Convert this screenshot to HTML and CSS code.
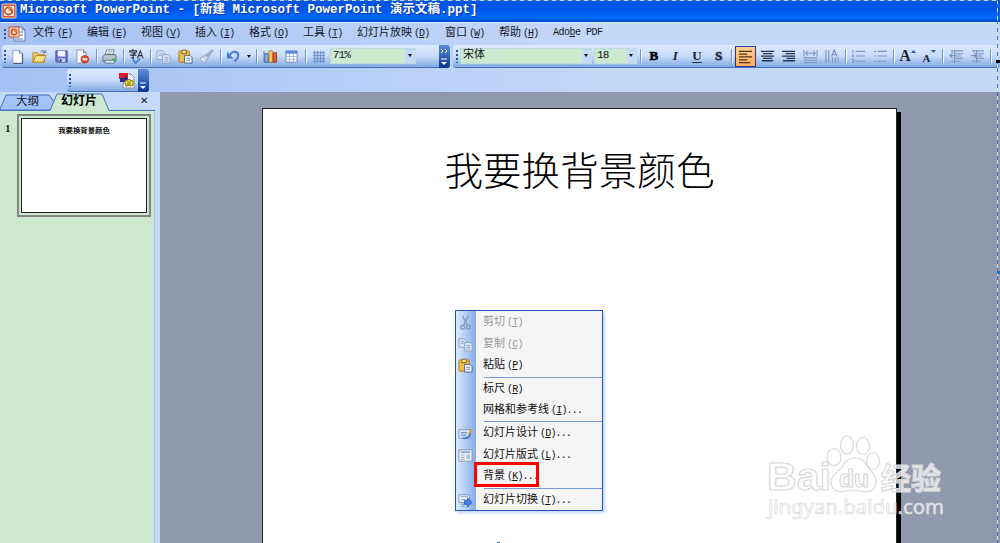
FILE: index.html
```html
<!DOCTYPE html>
<html lang="zh-CN">
<head>
<meta charset="utf-8">
<title>Microsoft PowerPoint</title>
<link rel="stylesheet" href="styles.css">
</head>
<body>
<div class="window">
<header class="titlebar">
<svg class="appicon" width="16" height="16" viewBox="0 0 16 16"><rect x="1" y="1" width="14" height="14" rx="1" fill="#d9623a" stroke="#f6c9ae"/><rect x="3" y="3" width="10" height="10" fill="#fff1e4"/><circle cx="7.5" cy="8" r="3.6" fill="none" stroke="#c84820" stroke-width="1.6"/><path d="M7.5 8V4h3.5v4z" fill="#e08040"/><path d="M11 6v5" stroke="#c84820"/></svg>
<h1>Microsoft PowerPoint - [新建 Microsoft PowerPoint 演示文稿.ppt]</h1>
</header>
<nav class="menubar">
<i class="grip"></i>
<svg class="docicon" width="18" height="17" viewBox="0 0 18 17"><path d="M6 1h8l3 3v11H6z" fill="#f8fbff" stroke="#567aa8"/><path d="M14 1v3h3M12 6h3M12 9h3M7 13h8" fill="none" stroke="#567aa8"/><rect x="1" y="1" width="10" height="10" fill="#f9d9c6" stroke="#c84c24"/><circle cx="6" cy="6" r="2.7" fill="none" stroke="#c84c24" stroke-width="1.5"/><path d="M6 6V3h3v3z" fill="#e08244"/></svg>
<div class="menus">
<span>文件<b>(<u>F</u>)</b></span><span>编辑<b>(<u>E</u>)</b></span><span>视图<b>(<u>V</u>)</b></span><span>插入<b>(<u>I</u>)</b></span><span>格式<b>(<u>O</u>)</b></span><span>工具<b>(<u>T</u>)</b></span><span class="wide">幻灯片放映<b>(<u>D</u>)</b></span><span>窗口<b>(<u>W</u>)</b></span><span>帮助<b>(<u>H</u>)</b></span><span class="latin">Ado<u>b</u>e PDF</span>
</div>
</nav>
<div class="toolrow">
<div class="toolbar standard">
<i class="grip"></i>
<span class="btn"><svg viewBox="0 0 16 16"><path d="M3 1.500h7l3 3V15H3z" fill="#fff" stroke="#8aa0c0"/><path d="M13.500 5v10.500h-10" fill="none" stroke="#44567c"/><path d="M10 1.500v3h3" fill="#dce6f4" stroke="#667ca0"/></svg></span>
<span class="btn"><svg viewBox="0 0 16 16"><path d="M1 14V4h5l1 2h6v8z" fill="#f3cf6c" stroke="#b68a28"/><path d="M1 14l3-7h11l-3 7z" fill="#ffdf83" stroke="#b28222"/><path d="M9 3q3-3 5 1m0 0v-3m0 3h-3" fill="none" stroke="#547398"/></svg></span>
<span class="btn"><svg viewBox="0 0 16 16"><path d="M2 2h12v12H3l-1-1z" fill="#6c70cf" stroke="#4347a0"/><path d="M4 2h8v6H4z" fill="#edf2ff"/><path d="M5 10h7v4H5z" fill="#cad0e9"/><path d="M6 11h2v3H6z" fill="#343b7c"/></svg></span>
<span class="btn"><svg viewBox="0 0 16 16"><path d="M2 1h7l3 3v11H2z" fill="#f6f9ff" stroke="#8a9cbc"/><path d="M9 1v3h3" fill="none" stroke="#647898"/><circle cx="10.500" cy="11" r="4" fill="#ea5334" stroke="#b93620"/><path d="M8 11h5" stroke="#fff" stroke-width="2"/></svg></span>
<i class="sep"></i>
<span class="btn"><svg viewBox="0 0 16 16"><path d="M5 1h8l-2 6H3z" fill="#fff" stroke="#68788f"/><path d="M1 8l2-2h11l1 2v5H1z" fill="#bac5ce" stroke="#536571"/><path d="M3 12h10v3H3z" fill="#e5edf2" stroke="#637684"/><path d="M6 3h5M5 5h5" stroke="#8c9db2"/><circle cx="12.500" cy="11" r="1.500" fill="#29cb34"/></svg></span>
<i class="sep"></i>
<span class="btn"><svg viewBox="0 0 16 16"><path d="M4 0v2M1 4V2h7v2M2 4h5L4.500 6v4l-2-1M1 6.500h7M9 10l3-8 3 8M10 7h4" fill="none" stroke="#29313c" stroke-width="1.200"/><path d="M4 11l3 4 5-5" fill="none" stroke="#4d82d2" stroke-width="2"/></svg></span>
<i class="sep"></i>
<span class="btn"><svg viewBox="0 0 16 16"><g fill="#d7e3f6" stroke="#91a5c8"><path d="M1 2h6l2 2v7H1z"/><path d="M7 6h6l2 2v7H7z"/><path d="M3 5h4M3 7h3M9 9h4M9 11h4M9 13h4"/></g></svg></span>
<span class="btn"><svg viewBox="0 0 16 16"><rect x="1" y="2" width="11" height="12" rx="1" fill="#edbf45" stroke="#ad7b19"/><path d="M4 3l1-2h3l1 2v2H4z" fill="#f6e18d" stroke="#785e2e"/><path d="M7 7h6l2 2v6H7z" fill="#eef3fc" stroke="#526789"/><path d="M9 10h4M9 12h4" stroke="#7590bf"/></svg></span>
<span class="btn"><svg viewBox="0 0 16 16"><path d="M14 1l1 1-5 6-2-2z" fill="#a7b6cf" stroke="#8496b8"/><path d="M7 6l3 3-4 6-5-5z" fill="#c7d1df" stroke="#94a5c1"/><path d="M3 10l3 3" stroke="#eaf0fb" stroke-width="2"/></svg></span>
<i class="sep"></i>
<span class="btn"><svg viewBox="0 0 16 16"><path d="M4 6c3-4 8-4 9 0 0 3-1 5-4 7" fill="none" stroke="#477bd7" stroke-width="2.200"/><path d="M1 3v7h7z" fill="#477bd7"/></svg></span>
<i class="drop"></i>
<i class="sep"></i>
<span class="btn"><svg viewBox="0 0 16 16"><path d="M1 2v12h13" fill="none" stroke="#667b9d"/><path d="M2 5h3.500v9H2z" fill="#9cb4dd" stroke="#355da1"/><path d="M6.500 2H10v12H6.500z" fill="#ffd359" stroke="#b18122"/><path d="M11 4h3.500v10H11z" fill="#e85c3b" stroke="#a33d22"/></svg></span>
<span class="btn"><svg viewBox="0 0 16 16"><path d="M2 2h12v12H2z" fill="#fff" stroke="#738bb7"/><path d="M2 2h12v3H2z" fill="#5688dd"/><path d="M2 8h12M2 11h12M6 5v9M10 5v9" stroke="#a7b8d4"/></svg></span>
<i class="sep"></i>
<span class="btn"><svg viewBox="0 0 16 16"><path d="M4 2v13M7 2v13M10 2v13M13 2v13M2 4h13M2 7h13M2 10h13M2 13h13" stroke="#6688c2"/></svg></span>
<span class="combo zoom"><em>71%</em><i class="drop"></i></span>
<span class="more"><svg viewBox="0 0 10 22"><path d="M2 4l2 2-2 2M6 4l2 2-2 2M2 14h6" fill="none" stroke="#fff"/><path d="M2 17h6l-3 3z" fill="#fff"/></svg></span>
</div>
<div class="toolbar formatting">
<i class="grip"></i>
<span class="combo font"><em>宋体</em><i class="drop"></i></span>
<span class="combo size"><em>18</em><i class="drop"></i></span>
<i class="sep"></i>
<span class="btn letter bold">B</span><span class="btn letter italic">I</span><span class="btn letter under">U</span><span class="btn letter shadow">S</span>
<i class="sep"></i>
<span class="btn active"><svg viewBox="0 0 16 16"><path d="M1 2.500h14M1 5.500h9M1 8.500h14M1 11.500h9M1 14.500h12" stroke="#51351f" stroke-width="1.300"/></svg></span>
<span class="btn"><svg viewBox="0 0 16 16"><path d="M1 2.500h14M3 5h10M1 7.500h14M3 10h10M2 12.500h12" stroke="#26334d" stroke-width="1.400"/></svg></span>
<span class="btn"><svg viewBox="0 0 16 16"><path d="M1 2.500h14M5 5h10M1 7.500h14M6 10h9M2 12.500h13" stroke="#26334d" stroke-width="1.400"/></svg></span>
<span class="btn pale"><svg viewBox="0 0 16 16"><path d="M1 1v7M15 1v7M3 4.500h10M5 2L3 4.500 5 7M11 2l2 2.500L11 7M1 9.500h14M1 12h14M1 14.500h14"/></svg></span>
<span class="btn pale"><svg viewBox="0 0 16 16"><path d="M2 1v14M5 1v14M9 9v6M12 9v6M15 9v6M8 8l3-7 3 7M9 6h4"/></svg></span>
<i class="sep"></i>
<span class="btn pale"><svg viewBox="0 0 16 16"><path d="M2 1v3M1 6.500h2M1 8h2M1 11h2v3H1M5 2.500h10M5 7.500h10M5 13h10"/></svg></span>
<span class="btn pale"><svg viewBox="0 0 16 16"><path d="M1 2.500h2M1 7.500h2M1 13h2" stroke-width="2"/><path d="M5 2.500h10M5 7.500h10M5 13h10"/></svg></span>
<i class="sep"></i>
<span class="btn letter grow">A<svg viewBox="0 0 5 4"><path d="M0 3l2.500-3L5 3z"/></svg></span>
<span class="btn letter shrink">A<svg viewBox="0 0 5 4"><path d="M0 0h5L2.500 3z"/></svg></span>
<i class="sep"></i>
<span class="btn pale"><svg viewBox="0 0 16 16"><path d="M2 2h13M7 5h8M7 7.500h6M7 10h8M2 13h10M7 7H1M4 4L1 7l3 3M6 1v14"/></svg></span>
<span class="btn pale"><svg viewBox="0 0 16 16"><path d="M2 2h13M8 5h7M8 7.500h5M8 10h7M2 13h10M1 7h5M4 4l3 3-3 3M7 1v14"/></svg></span>
<i class="sep"></i>
</div>
</div>
<div class="toolrow second">
<div class="toolbar mini"><i class="grip"></i>
<svg class="pdf" width="17" height="17" viewBox="0 0 17 17"><path d="M6 2h7l3 3v11H5z" fill="#f6f6f6" stroke="#8993a5"/><path d="M1 1h9v6H1z" fill="#df2029"/><path d="M2 6h5V3l4 5-4 5v-3H2z" fill="#25288c"/><path d="M7 9q4-3 8 0v4q-3 2-5 0l-2 2v-3H7z" fill="#f5e932" stroke="#847b21"/><path d="M9 10h4M9 12h4" stroke="#777022"/></svg>
<span class="more"><svg viewBox="0 0 10 22"><path d="M2 14h6" stroke="#fff"/><path d="M2 17h6l-3 3z" fill="#fff"/></svg></span></div>
</div>
<main>
<aside>
<div class="tabs"><svg class="tabshape" width="155" height="19" viewBox="0 0 155 19"><path d="M0 17L6 3h43l5 7-3 8H0z" fill="#a3c2f7" stroke="#4573bd"/><path d="M50 19L57 2h45l7 17z" fill="#cce8cf"/><path d="M0 18.500h50L57 2h45l7 16.500h46" fill="none" stroke="#4573bd"/></svg>
<span class="outline">大纲</span><span class="slides">幻灯片</span><span class="close">✕</span></div>
<div class="thumbs"><span class="num">1</span><div class="thumb"><div>我要换背景颜色</div></div></div>
</aside>
<section class="workspace">
<article class="slide"><h2>我要换背景颜色</h2></article>
<i class="slide-shadow"></i>
</section>
</main>
<div class="context">
<div class="item off"><svg viewBox="0 0 16 16"><path d="M5 1l5 10M11 1L6 11" stroke="#899db9" stroke-width="1.500"/><g fill="none" stroke="#899db9" stroke-width="1.500"><circle cx="5" cy="13" r="2"/><circle cx="11" cy="13" r="2"/></g></svg><span>剪切<b>(<u>T</u>)</b></span></div>
<div class="item off"><svg viewBox="0 0 16 16"><g fill="#d7e3f6" stroke="#91a5c8"><path d="M1 2h6l2 2v7H1z"/><path d="M7 6h6l2 2v7H7z"/><path d="M3 5h4M3 7h3M9 9h4M9 11h4M9 13h4"/></g></svg><span>复制<b>(<u>C</u>)</b></span></div>
<div class="item"><svg viewBox="0 0 16 16"><rect x="1" y="2" width="11" height="12" rx="1" fill="#edbf45" stroke="#ad7b19"/><path d="M4 3l1-2h3l1 2v2H4z" fill="#f6e18d" stroke="#785e2e"/><path d="M7 7h6l2 2v6H7z" fill="#eef3fc" stroke="#526789"/><path d="M9 10h4M9 12h4" stroke="#7590bf"/></svg><span>粘贴<b>(<u>P</u>)</b></span></div>
<hr>
<div class="item"><i></i><span>标尺<b>(<u>R</u>)</b></span></div>
<div class="item"><i></i><span>网格和参考线<b>(<u>I</u>)...</b></span></div>
<hr>
<div class="item"><svg viewBox="0 0 16 16"><path d="M1 4h12v9H1z" fill="#eef4ff" stroke="#758fb8"/><path d="M3 7h7M3 10h6" stroke="#7796c9" stroke-width="2"/><path d="M5 13q6 1 8-5" fill="none" stroke="#3a70d4" stroke-width="2"/><path d="M11 9l4-6" stroke="#d9a22d" stroke-width="2"/></svg><span>幻灯片设计<b>(<u>D</u>)...</b></span></div>
<div class="item"><svg viewBox="0 0 16 16"><path d="M1 2h14v12H1z" fill="#f4f7fc" stroke="#7f90a9"/><path d="M3 4.500h10" stroke="#8ea5c8" stroke-width="2"/><path d="M3 7.500h4M3 10h4M3 12h4" stroke="#8da0bd"/><path d="M9 7h4v5H9z" fill="#aac2eb"/></svg><span>幻灯片版式<b>(<u>L</u>)...</b></span></div>
<div class="item"><i></i><span>背景<b>(<u>K</u>)...</b></span><i class="highlight"></i></div>
<hr>
<div class="item"><svg viewBox="0 0 16 16"><path d="M1 2h11v8H1z" fill="#f2f6ff" stroke="#7892bd"/><path d="M3 4h7M3 7h5M3 12h4M4 14h3" stroke="#7892bd"/><path d="M7 8h3V5l5 5-5 5v-3H7z" fill="#487fe1" stroke="#3064bd"/></svg><span>幻灯片切换<b>(<u>T</u>)...</b></span></div>
</div>
<svg class="watermark" width="186" height="94" viewBox="0 0 186 94">
<g fill="#fff" fill-opacity=".75" stroke="#d9d9d9" stroke-width="1.200">
<text class="logo" x="3" y="60" textLength="64" lengthAdjust="spacingAndGlyphs">Bai</text>
<ellipse cx="70" cy="27" rx="7" ry="8.500"/><ellipse cx="83" cy="15" rx="6.500" ry="9"/><ellipse cx="99" cy="16" rx="6.500" ry="8.500"/><ellipse cx="109" cy="31" rx="6.500" ry="8.500"/>
<path d="M80 34C85 26 97 26 102 34C105 41 113 44 112 53C111 62 103 63 97 61Q90 59 82 61C73 64 67 59 67 52C67 44 76 42 80 34z"/>
<text class="du" x="75" y="57" textLength="30" lengthAdjust="spacingAndGlyphs">du</text>
<text class="hanzi" x="117" y="59" textLength="60" lengthAdjust="spacingAndGlyphs">经验</text>
<text class="url" x="4" y="84" textLength="176" lengthAdjust="spacingAndGlyphs">jingyan.baidu.com</text>
</g></svg>
<i class="edge"></i><i class="topedge"></i><i class="handle"></i><i class="cursor"></i><i class="handle bottom"></i>
</div>
</body>
</html>
```
FILE: styles.css
```css
* { box-sizing: border-box; }
body { margin: 0; overflow: hidden; font-family: "Liberation Mono", "Noto Sans CJK SC", monospace; color: #111827; }
.window { position: relative; width: 1000px; height: 543px; overflow: hidden; background: linear-gradient(90deg, #a4c0f4, #c4d8f8 60%); }
i, em { font-style: normal; }
.titlebar { height: 22px; padding-top: 1px; display: flex; align-items: center; background: linear-gradient(#0754df, #0055ea 45%, #006aff 80%, #0047c8); }
.appicon { margin: 0 3px 2px 1px; }
h1 { margin: 0; padding-bottom: 2px; font-size: 12.5px; line-height: 17px; white-space: pre; color: #fff; text-shadow: 1px 1px #0738a5; }
.menubar { height: 23px; display: flex; align-items: center; border-top: 1px solid #dce9ff; }
.grip { width: 2px; height: 13px; flex: none; background: repeating-linear-gradient(#31518b 0 2px, transparent 2px 4px); }
.menubar .grip { height: 10px; margin-left: 4px; }
.docicon { margin-left: 2px; }
.menus { display: flex; padding-left: 7px; margin-top: -2px; }
.menus span { width: 54px; font-size: 11px; line-height: 18px; white-space: nowrap; }
.menus .wide { width: 88px; }
b, .menus .latin { font-weight: 400; font-size: 10px; letter-spacing: -.5px; }
b { margin-left: 2px; }
.menus b { letter-spacing: -.9px; }
u { text-underline-offset: 1px; }
.toolrow { height: 23px; display: flex; }
.second { height: 24px; padding: 1px 0 0 67px; }
.toolbar { display: flex; align-items: center; height: 23px; border-bottom: 1px solid #446fb4; border-radius: 3px; background: linear-gradient(#dceafe, #c7dcfa 50%, #84a9e2); }
.standard { width: 448px; margin-left: 2px; }
.standard .grip { margin-left: 2px; margin-right: 1.2px; }
.formatting { width: 547px; margin-left: 3px; }
.formatting .grip { margin: 0 2px 0 3px; }
.btn { width: 21.6px; height: 21px; flex: none; display: flex; align-items: center; justify-content: center; }
.btn svg { width: 15px; height: 15px; }
.sep { width: 5.4px; height: 14px; flex: none; background: linear-gradient(90deg, transparent 2px, #6f94cf 2px 3px, #f3f8ff 3px 4px, transparent 4px); }
.drop { width: 9.5px; height: 15px; flex: none; display: flex; align-items: center; justify-content: center; }
.drop::after { content: ""; border: 2.5px solid transparent; border-top: 3px solid #111; border-bottom: 0; }
.combo { height: 16px; flex: none; display: flex; justify-content: space-between; align-items: center; background: #cce8cf; border: 1px solid #bcdce0; padding-left: 2px; margin-bottom: 1px; }
.combo em { font-size: 11px; letter-spacing: -.8px; line-height: 14px; margin-top: -2px; }
.combo .drop { background: #c5dafa; height: 14px; }
.zoom { width: 86px; }
.font { width: 132px; }
.combo.font em { letter-spacing: 0; }
.size { width: 43px; margin: 0 .6px 1px 2px; }
.more { width: 11px; height: 23px; margin-left: auto; background: linear-gradient(#5c8ddd, #0a3792); border-radius: 0 3px 3px 0; }
.more svg { width: 10px; height: 22px; display: block; }
.letter { font: bold 13px "Liberation Serif", serif; color: #1d2738; }
.letter.bold { color: #000; -webkit-text-stroke: .6px #000; }
.letter.italic { font-style: italic; }
.under { text-decoration: underline; text-underline-offset: 2px; }
.letter.shadow { font-size: 13px; text-shadow: 1px 1px #6d83a8; -webkit-text-stroke: .4px #1d2738; }
.active { background: linear-gradient(#ffd195, #ffac55); border: 1px solid #25379c; }
.pale path { fill: none; stroke: #7c95c1; stroke-width: 1.2; }
.letter.grow { font-size: 16px; }
.letter.shrink { font-size: 11px; padding-top: 4px; }
.letter.grow svg, .letter.shrink svg { width: 5px; height: 4px; margin-bottom: 9px; fill: #315c9f; }
.letter.shrink svg { margin-bottom: 12px; }
.mini { width: 82px; }
.mini .grip { margin-left: 2px; }
.pdf { margin-left: 47px; }
main { display: flex; height: 451px; }
aside { width: 160px; background: #cce8cf; border-right: 5px solid #c5dafa; box-shadow: inset -1px 0 #a8c8e7; }
.tabs { position: relative; height: 19px; display: flex; width: 155px; background: #c5dafa; font-size: 11.5px; line-height: 19px; }
.tabshape { position: absolute; left: 0; top: 0; }
.tabs span { position: relative; }
.outline { margin-left: 16px; width: 45px; }
.slides { width: 79px; font-weight: 700; color: #000; font-size: 12px; padding-top: 1px; }
.tabs .close { font: bold 10px/17px "DejaVu Sans", sans-serif; }
.thumbs { display: flex; padding-top: 3px; }
.num { width: 17px; padding: 8px 0 0 5px; font: bold 11px "Liberation Serif", serif; }
.thumb { width: 134px; height: 103px; padding: 2px; border: 2px solid #858585; }
.thumb div { height: 95px; border: 1px solid #222; background: #fff; color: #111; text-align: center; font-size: 7.4px; line-height: 25px; font-weight: 700; }
.workspace { flex: 1; display: flex; padding: 15px 0 0 102px; background: #9199ae; border-top: 1px solid #8b96b3; }
.slide { width: 635px; background: #fff; border: 1px solid #222; border-bottom: 0; }
.slide h2 { margin: 32px 0 0; text-align: center; font: 300 38.6px/54px "Noto Sans CJK SC", sans-serif; color: #000; }
.slide-shadow { width: 4px; background: #000; margin-top: 4px; }
.context { position: absolute; left: 455px; top: 310px; width: 148px; height: 201px; padding-top: 1px; border: 1px solid #2455b9; background: linear-gradient(90deg, #dceaff 0, #86ace8 20px, #f5f5f5 20px); box-shadow: 2px 2px 3px #c5d4f3; font-size: 11px; color: #111; }
.item { position: relative; height: 21.6px; display: flex; align-items: center; padding-left: 2px; white-space: nowrap; }
.item svg, .item > i:first-child { width: 15px; height: 15px; flex: none; margin-right: 10px; }
.item span { line-height: 18px; }
.item span b { letter-spacing: -.8px; }
.off { color: #969696; }
.context hr { border: 0; background: #7899d6; height: 1px; margin: 0 0 .5px 28px; }
.highlight { position: absolute; left: 18px; top: -4px; width: 65px; height: 25px; border: 3px solid #f00; }
.watermark { position: absolute; left: 764px; top: 430px; }
.logo { font: bold 39px "Liberation Sans", sans-serif; }
.du { font: bold 23px "Liberation Sans", sans-serif; }
.hanzi { font: bold 30px "Noto Sans CJK SC", sans-serif; }
.url { font: 20px "Noto Sans", sans-serif; stroke-width: .7px; }
.edge { position: absolute; left: 997px; top: 0; width: 1px; height: 543px; background: repeating-linear-gradient(#d3e7d3 0 4px, #3970c8 4px 8px); }
.topedge { position: absolute; left: 0; top: 0; width: 998px; height: 1px; background: repeating-linear-gradient(90deg, #bddbd6 0 4px, #3975c5 4px 8px); }
.handle { position: absolute; left: 997px; top: 271px; width: 3px; height: 3px; background: #2375c5; }
.bottom { left: 497px; top: 542px; }
.cursor { position: absolute; left: 996px; top: 60px; width: 4px; height: 3px; background: #000; }
```
